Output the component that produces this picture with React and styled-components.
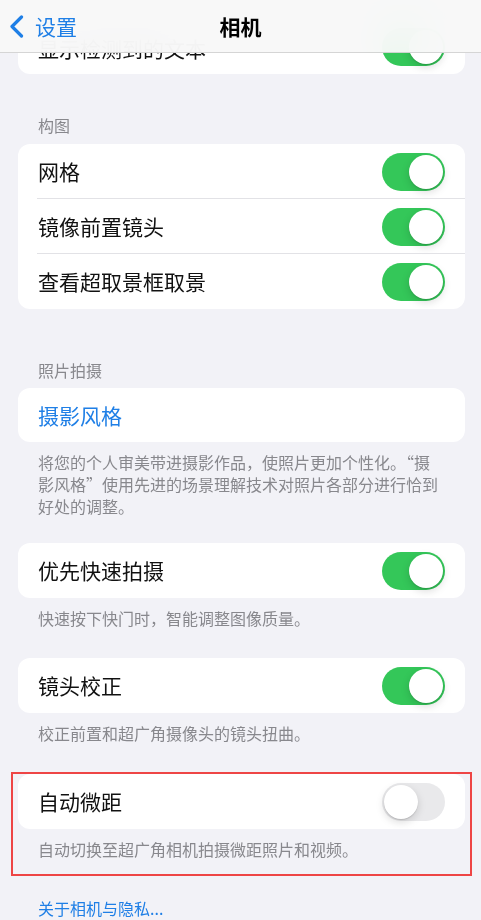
import React from "react";
import styled, { createGlobalStyle } from "styled-components";

const Global = createGlobalStyle`
  html, body { margin: 0; padding: 0; overflow: hidden; background: #f2f2f7; }
  body { font-family: "Noto Sans CJK SC", "Noto Sans", sans-serif; -webkit-font-smoothing: antialiased; }
`;

const Screen = styled.div`
  width: 481px;
  height: 920px;
  position: relative;
  overflow: hidden;
  background: #f2f2f7;
`;

const NavBar = styled.header`
  position: absolute;
  top: 0;
  left: 0;
  right: 0;
  height: 53px;
  display: grid;
  grid-template-columns: 1fr auto 1fr;
  align-items: center;
  background: rgba(248, 248, 248, 0.95);
  backdrop-filter: blur(20px) saturate(180%);
  border-bottom: 1px solid rgba(0, 0, 0, 0.14);
  box-sizing: border-box;
  z-index: 10;
`;

const BackButton = styled.div`
  display: flex;
  align-items: center;
  gap: 11px;
  padding-left: 9px;
  color: #1f7fe6;
  font-size: 21px;
  line-height: 1;
`;

const NavTitle = styled.div`
  font-size: 21px;
  font-weight: 700;
  color: #000;
  line-height: 1;
`;

const Content = styled.main`
  padding: 19px 16px 0 18px;
  display: flex;
  flex-direction: column;
`;

const Card = styled.section`
  background: #fff;
  border-radius: 12px;
  overflow: hidden;
  margin-top: ${(p) => p.$mt || 0}px;
`;

const Row = styled.div`
  height: ${(p) => p.$h || 55}px;
  display: flex;
  align-items: center;
  justify-content: space-between;
  padding: 0 20px 0 20px;
  position: relative;
  &:not(:last-child)::after {
    content: "";
    position: absolute;
    left: 19px;
    right: 0;
    bottom: 0;
    height: 1px;
    background: #e2e2e6;
  }
`;

const Label = styled.span`
  font-size: 21px;
  color: ${(p) => (p.$link ? "#1f7fe6" : "#111")};
  line-height: 1;
  padding-top: ${(p) => (p.$under ? 3 : 0)}px;
`;

const Header = styled.div`
  padding: 0 20px;
  font-size: 16px;
  line-height: 22px;
  color: #88888d;
  margin-top: ${(p) => p.$mt}px;
  margin-bottom: ${(p) => p.$mb}px;
`;

const Footer = styled.div`
  padding: 9px 20px 0 20px;
  font-size: 16px;
  line-height: 22px;
  color: #88888d;
`;

const Track = styled.div`
  width: 63px;
  height: 38px;
  border-radius: 19px;
  box-sizing: border-box;
  padding: 2px;
  display: flex;
  justify-content: ${(p) => (p.$on ? "flex-end" : "flex-start")};
  background: ${(p) => (p.$on ? "#34c759" : "#e9e9eb")};
`;

const Knob = styled.div`
  width: 34px;
  height: 34px;
  border-radius: 50%;
  background: #fff;
  box-shadow: 0 3px 8px rgba(0, 0, 0, 0.15), 0 1px 1px rgba(0, 0, 0, 0.12);
`;

const Highlight = styled.div`
  margin: 28px -7px 0 -7px;
  border: 2px solid #ee4545;
  padding: 0 5px 14px 5px;
`;

const LinkText = styled.div`
  margin-top: 21px;
  padding: 0 20px;
  font-size: 16px;
  line-height: 22px;
  color: #1f7fe6;
`;

const Toggle = ({ on }) => (
  <Track $on={on}>
    <Knob />
  </Track>
);

const Chevron = () => (
  <svg width="15" height="23" viewBox="0 0 15 23" fill="none">
    <path d="M12.5 2 L3 11.5 L12.5 21" stroke="#1f7fe6" strokeWidth="3.2" strokeLinecap="round" strokeLinejoin="round" />
  </svg>
);

export default function App() {
  return (
    <>
      <Global />
      <Screen>
        <NavBar>
          <BackButton>
            <Chevron />
            <span>设置</span>
          </BackButton>
          <NavTitle>相机</NavTitle>
          <div />
        </NavBar>
        <Content>
          <Card>
            <Row>
              <Label $under>显示检测到的文本</Label>
              <Toggle on />
            </Row>
          </Card>

          <Header $mt={40} $mb={8}>构图</Header>
          <Card>
            <Row>
              <Label>网格</Label>
              <Toggle on />
            </Row>
            <Row>
              <Label>镜像前置镜头</Label>
              <Toggle on />
            </Row>
            <Row>
              <Label>查看超取景框取景</Label>
              <Toggle on />
            </Row>
          </Card>

          <Header $mt={50} $mb={7}>照片拍摄</Header>
          <Card>
            <Row $h={54}>
              <Label $link>摄影风格</Label>
            </Row>
          </Card>
          <Footer>
            将您的个人审美带进摄影作品，使照片更加个性化。“摄影风格”使用先进的场景理解技术对照片各部分进行恰到好处的调整。
          </Footer>

          <Card $mt={26}>
            <Row>
              <Label>优先快速拍摄</Label>
              <Toggle on />
            </Row>
          </Card>
          <Footer>快速按下快门时，智能调整图像质量。</Footer>

          <Card $mt={29}>
            <Row>
              <Label>镜头校正</Label>
              <Toggle on />
            </Row>
          </Card>
          <Footer>校正前置和超广角摄像头的镜头扭曲。</Footer>

          <Highlight>
            <Card>
              <Row>
                <Label>自动微距</Label>
                <Toggle on={false} />
              </Row>
            </Card>
            <Footer>自动切换至超广角相机拍摄微距照片和视频。</Footer>
          </Highlight>

          <LinkText>关于相机与隐私...</LinkText>
        </Content>
      </Screen>
    </>
  );
}
